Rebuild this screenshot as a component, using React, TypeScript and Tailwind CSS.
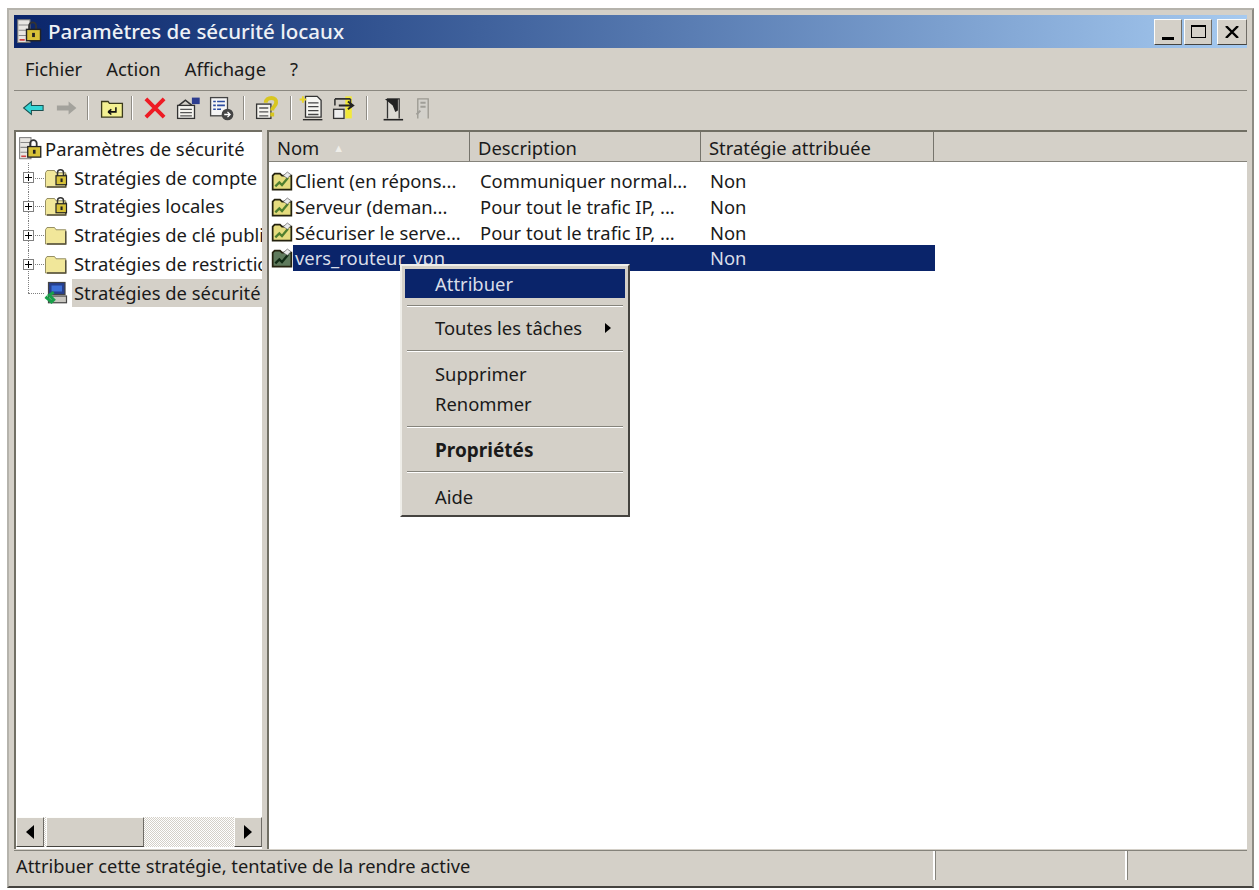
import type { ReactNode } from 'react';

const SHIELD = 'border border-t-[#fdfdfb] border-l-[#fdfdfb] border-r-[#6f6c66] border-b-[#45433f]';

function ServerLockIcon({ size = 28 }: { size?: number }) {
  return (
    <svg width={size} height={size} viewBox="0 0 16 16" className="shrink-0">
      <rect x="1" y="1" width="7" height="13" fill="#e8e6e2" stroke="#777" strokeWidth="0.6" />
      <path d="M1.5 4h6M1.5 7h6M1.5 10h6" stroke="#888" strokeWidth="0.7" />
      <path d="M2 12.5h3" stroke="#d04040" strokeWidth="1" />
      <path d="M7.5 7V4.5a2 2 0 0 1 4 0V7" fill="none" stroke="#333" strokeWidth="1.1" />
      <rect x="6" y="6.5" width="8" height="6.5" fill="#d8c238" stroke="#222" strokeWidth="0.8" />
      <rect x="9.2" y="8.5" width="1.6" height="2.4" fill="#222" />
    </svg>
  );
}

function FolderIcon({ lock }: { lock?: boolean }) {
  return (
    <svg width="24" height="24" viewBox="0 0 16 16" className="shrink-0">
      <path d="M1 4.5 2 3h5l1 1.5h6.5V14H1z" fill="#f1e79a" stroke="#8b8458" strokeWidth="0.6" />
      <path d="M14.5 5.5V14H2" fill="none" stroke="#55503a" strokeWidth="1" />
      {lock && (
        <g>
          <path d="M9 7V4.5a2 2 0 0 1 4 0V7" fill="none" stroke="#333" strokeWidth="1" />
          <rect x="8" y="6.5" width="7" height="6" fill="#d8c238" stroke="#222" strokeWidth="0.8" />
          <rect x="11" y="8.3" width="1.4" height="2.4" fill="#222" />
        </g>
      )}
    </svg>
  );
}

function PolicyComputerIcon() {
  return (
    <svg width="24" height="24" viewBox="0 0 16 16" className="shrink-0">
      <rect x="3" y="1" width="11" height="8" fill="#26408f" stroke="#444" strokeWidth="0.8" />
      <rect x="5" y="3" width="7" height="4" fill="#3c6fd8" />
      <rect x="3" y="10" width="12" height="4.5" fill="#c9c7c1" stroke="#444" strokeWidth="0.8" />
      <path d="M1 10.5 5 14l1.5-1.5L3.5 9.5l3-2" fill="none" stroke="#18a04a" strokeWidth="2" />
    </svg>
  );
}

function PolicyIcon({ selected }: { selected?: boolean }) {
  return (
    <svg width="22" height="20" viewBox="0 0 16 15" className="shrink-0">
      <path d="M1 3.5 2.500 2h4L8 3.500h7V14H1z" fill={selected ? '#5f7a5c' : '#e5dc7e'} stroke="#24220f" strokeWidth="1.3" />
      <path d="M3 11.5 6 8.500l2 2 4.500-5.500" fill="none" stroke={selected ? '#0f2a14' : '#4f7f2f'} strokeWidth="1.7" />
      <path d="M9 3.500 12 .8l2.800 2L12 5.500z" fill="#ececec" stroke="#555" strokeWidth="0.5" />
    </svg>
  );
}

function ToolIcon({ children }: { children: ReactNode }) {
  return (
    <svg width="26" height="26" viewBox="0 0 20 20" className="shrink-0">
      {children}
    </svg>
  );
}

function Divider() {
  return <div className="w-[2px] h-[24px] mx-[6px] border-l border-l-[#8f8c85] border-r border-r-white" />;
}

function Toolbar() {
  return (
    <div className="flex items-center h-[35px] pl-[7px] border-t border-t-[#8b8880]">
      <ToolIcon>
        <path d="M2 10 8 5v3h9v4H8v3z" fill="#33d6d6" stroke="#1a5050" strokeWidth="0.8" />
      </ToolIcon>
      <div className="w-[6px]" />
      <ToolIcon>
        <path d="M18 10l-6-5v3H3v4h9v3z" fill="#a3a29c" />
      </ToolIcon>
      <div className="w-[2px]" />
      <Divider />
      <div className="w-[4px]" />
      <ToolIcon>
        <path d="M2 5h5l1 1.5h10V17H2z" fill="#f3f092" stroke="#3a3a1c" strokeWidth="1" />
        <path d="M7 13h6V9.500M7 13l2.500-2M7 13l2.500 2" fill="none" stroke="#111" strokeWidth="1.2" />
      </ToolIcon>
      <Divider />
      <div className="w-[3px]" />
      <ToolIcon>
        <path d="M3 3l14 14M17 3 3 17" stroke="#ee1b24" strokeWidth="3" />
      </ToolIcon>
      <div className="w-[7px]" />
      <ToolIcon>
        <rect x="2" y="8" width="13" height="10" fill="#f4f3ee" stroke="#333" strokeWidth="1" />
        <path d="M4 11h9M4 13.5h9M4 16h9" stroke="#555" strokeWidth="1" />
        <path d="M3 8l5-4 5 4" fill="none" stroke="#333" strokeWidth="1.2" />
        <rect x="13" y="2" width="6" height="5" fill="#2d3d8f" />
      </ToolIcon>
      <div className="w-[7px]" />
      <ToolIcon>
        <rect x="2" y="2" width="13" height="14" fill="#f5f5f5" stroke="#444" strokeWidth="1" />
        <path d="M4 5h2M7 5h6M4 8h2M7 8h6M4 11h2M7 11h3" stroke="#2d4da0" strokeWidth="1.2" />
        <circle cx="15" cy="15" r="4.5" fill="#444" />
        <path d="M12.5 15h4M15 13l2 2-2 2" fill="none" stroke="#fff" strokeWidth="1" />
      </ToolIcon>
      <div className="w-[3px]" />
      <Divider />
      <div className="w-[3px]" />
      <ToolIcon>
        <rect x="2" y="7" width="11" height="11" fill="#f4f3ee" stroke="#333" strokeWidth="1" />
        <path d="M4 10h7M4 13h7M4 16h7" stroke="#555" strokeWidth="1" />
        <path d="M9 6c0-5 9-5 8 0 0 3-3 2.5-3 6" fill="none" stroke="#d8c620" strokeWidth="3" />
        <rect x="12.5" y="13.5" width="3" height="3" fill="#d8c620" />
      </ToolIcon>
      <div className="w-[4px]" />
      <Divider />
      <div className="w-[1px]" />
      <ToolIcon>
        <path d="M5 1h9l3 3v13H5z" fill="#f6f6f2" stroke="#333" strokeWidth="1" />
        <path d="M7 6h8M7 9h8M7 12h8M7 15h8" stroke="#444" strokeWidth="1" />
        <path d="M3 1v5M0.5 3.5h5" stroke="#e8d52a" strokeWidth="1.5" />
        <path d="M3 19h15" stroke="#222" strokeWidth="1" />
      </ToolIcon>
      <div className="w-[6px]" />
      <ToolIcon>
        <rect x="11" y="1" width="5" height="17" fill="#f2e93a" />
        <path d="M3 3h12M3 3v5M15 3v5" fill="none" stroke="#333" strokeWidth="1.2" />
        <rect x="2" y="11" width="8" height="7" fill="#eee" stroke="#333" strokeWidth="1" />
        <path d="M6 8h10M13 5l4 3-4 3" fill="none" stroke="#222" strokeWidth="1.5" />
      </ToolIcon>
      <div className="w-[3px]" />
      <Divider />
      <div className="w-[7px]" />
      <ToolIcon>
        <path d="M5 18V3h9v15" fill="#dcdad4" stroke="#333" strokeWidth="1" />
        <path d="M3 3l6 5 2 5 2-1V3" fill="#222" />
        <path d="M2 19h15" stroke="#222" strokeWidth="1.2" />
      </ToolIcon>
      <div className="w-[3px]" />
      <ToolIcon>
        <path d="M6 18V3h8v15" fill="#d3d1cb" stroke="#9a9890" strokeWidth="1" />
        <path d="M8 6h4M8 9h4M5 15l3-3" stroke="#a09e98" strokeWidth="1.5" />
      </ToolIcon>
    </div>
  );
}

function TreeRow({ icon, label, selected, last }: { icon: ReactNode; label: string; selected?: boolean; last?: boolean }) {
  return (
    <div className="flex items-center h-[28.8px]">
      <div className="relative w-[28px] shrink-0 h-full">
        <div className={`absolute left-[12px] top-0 w-0 border-l border-dotted border-l-[#808080] ${last ? 'h-1/2' : 'h-full'}`} />
        <div className="absolute left-[12px] top-1/2 w-[16px] h-0 border-t border-dotted border-t-[#808080]" />
        {!last && (
          <div className="absolute left-[7px] top-[9px] w-[11px] h-[11px] bg-white border border-[#808080] flex items-center justify-center">
            <div className="relative w-[7px] h-[7px]">
              <div className="absolute left-0 top-[3px] w-[7px] h-px bg-black" />
              <div className="absolute left-[3px] top-0 w-px h-[7px] bg-black" />
            </div>
          </div>
        )}
      </div>
      {icon}
      <span className={`ml-[4px] pl-[2px] h-[28px] leading-[28px] flex-1 whitespace-nowrap overflow-hidden ${selected ? 'bg-[#d4d0c8]' : ''}`}>{label}</span>
    </div>
  );
}

function TreePane() {
  return (
    <div className="flex flex-col w-[248px] h-[719px] shrink-0 bg-white border-t-2 border-l-2 border-t-[#716f64] border-l-[#716f64] overflow-hidden">
      <div className="flex-1 pt-[2px] text-[18.4px] text-[#1a1a1a]">
        <div className="flex items-center h-[29.3px] pl-[2px]">
          <ServerLockIcon size={26} />
          <span className="ml-[1px] whitespace-nowrap">Paramètres de sécurité</span>
        </div>
        <TreeRow icon={<FolderIcon lock />} label="Stratégies de compte" />
        <TreeRow icon={<FolderIcon lock />} label="Stratégies locales" />
        <TreeRow icon={<FolderIcon />} label="Stratégies de clé publiques" />
        <TreeRow icon={<FolderIcon />} label="Stratégies de restriction" />
        <TreeRow icon={<PolicyComputerIcon />} label="Stratégies de sécurité" selected last />
      </div>
      <div className="flex h-[30px] mb-[2px] bg-[repeating-conic-gradient(#d4d0c8_0_25%,#ffffff_0_50%)] bg-[length:2px_2px]">
        <ScrollButton dir="left" />
        <div className={`w-[98px] ml-[2px] bg-[#d4d0c8] ${SHIELD}`} />
        <div className="flex-1" />
        <ScrollButton dir="right" />
      </div>
    </div>
  );
}

function ScrollButton({ dir }: { dir: 'left' | 'right' }) {
  return (
    <div className={`w-[28px] h-full bg-[#d4d0c8] flex items-center justify-center ${SHIELD}`}>
      <svg width="10" height="14" viewBox="0 0 10 14">
        <path d={dir === 'left' ? 'M9 0v14L1 7z' : 'M1 0v14l8-7z'} fill="#000" />
      </svg>
    </div>
  );
}

function ListRow({ name, desc, value, selected }: { name: string; desc: string; value: string; selected?: boolean }) {
  return (
    <div className="flex items-center h-[25.8px]">
      <div className="flex items-center w-[202px] h-full pl-[2px]">
        <PolicyIcon selected={selected} />
        <span className={`whitespace-nowrap h-full flex items-center pl-[2px] ${selected ? 'bg-[#0a246a] text-[#d9dde8] flex-1' : ''}`}>{name}</span>
      </div>
      <div className={`w-[230px] h-full flex items-center ${selected ? 'bg-[#0a246a]' : ''}`}>
        <span className="pl-[9px] whitespace-nowrap">{desc}</span>
      </div>
      <div className={`w-[234px] h-full flex items-center ${selected ? 'bg-[#0a246a] text-[#d9dde8]' : ''}`}>
        <span className="pl-[9px]">{value}</span>
      </div>
    </div>
  );
}

function ColumnHeader({ label, width, arrow }: { label: string; width: string; arrow?: boolean }) {
  return (
    <div className={`${width} h-full flex items-center pl-[8px] pt-[3px] shrink-0 border-r border-r-[#76746c]`}>
      <span>{label}</span>
      {arrow && <span className="ml-[14px] text-[11px] text-[#efeee9]">▲</span>}
    </div>
  );
}

function ListPane() {
  return (
    <div className="flex-1 h-[719px] bg-white border-t-2 border-l-2 border-t-[#716f64] border-l-[#716f64] text-[18.4px] text-[#1a1a1a]">
      <div className="flex h-[30px] bg-[#d4d0c8] border-b border-b-[#85837b]">
        <ColumnHeader label="Nom" width="w-[201px]" arrow />
        <ColumnHeader label="Description" width="w-[231px]" />
        <ColumnHeader label="Stratégie attribuée" width="w-[233px]" />
        <div className="flex-1" />
      </div>
      <div className="pt-[6px]">
        <ListRow name="Client (en répons..." desc="Communiquer normal..." value="Non" />
        <ListRow name="Serveur (deman..." desc="Pour tout le trafic IP, ..." value="Non" />
        <ListRow name="Sécuriser le serve..." desc="Pour tout le trafic IP, ..." value="Non" />
        <ListRow name="vers_routeur_vpn" desc="" value="Non" selected />
      </div>
    </div>
  );
}

function MenuItem({ label, hot, bold, arrow, h }: { label: string; hot?: boolean; bold?: boolean; arrow?: boolean; h: string }) {
  return (
    <div className={`flex items-center justify-between pl-[30px] pr-[14px] ${h} ${hot ? 'bg-[#0a246a] text-[#d9dde8]' : ''} ${bold ? 'font-bold text-[19px]' : ''}`}>
      <span>{label}</span>
      {arrow && (
        <svg width="6" height="10" viewBox="0 0 6 10">
          <path d="M0 0v10l6-5z" fill="#000" />
        </svg>
      )}
    </div>
  );
}

function MenuSeparator({ my }: { my: string }) {
  return <div className={`${my} mx-[2px] h-[2px] border-t border-t-[#85837b] border-b border-b-white`} />;
}

function ContextMenu() {
  return (
    <div className="absolute left-[391px] top-[254px] w-[230px] h-[253px] p-[3px] bg-[#d4d0c8] border-2 border-t-[#efeee9] border-l-[#efeee9] border-r-[#45433f] border-b-[#45433f] text-[18.4px] text-[#1a1a1a]">
      <MenuItem label="Attribuer" hot h="h-[29px]" />
      <MenuSeparator my="mt-[7px] mb-[6px]" />
      <MenuItem label="Toutes les tâches" arrow h="h-[30px]" />
      <MenuSeparator my="mt-[7px] mb-[7px]" />
      <MenuItem label="Supprimer" h="h-[30px]" />
      <MenuItem label="Renommer" h="h-[30px]" />
      <MenuSeparator my="mt-[7px] mb-[7px]" />
      <MenuItem label="Propriétés" bold h="h-[30px]" />
      <MenuSeparator my="mt-[6px] mb-[9px]" />
      <MenuItem label="Aide" h="h-[30px]" />
    </div>
  );
}

function WindowButton({ children, className }: { children: ReactNode; className?: string }) {
  return (
    <div className={`h-[26px] bg-[#d4d0c8] flex items-center justify-center ${SHIELD} ${className ?? ''}`}>
      {children}
    </div>
  );
}

export default function App() {
  return (
    <div className="w-[1259px] h-[890px] bg-white pt-[8px] pl-[7px] font-['Noto_Sans','Liberation_Sans',sans-serif] overflow-hidden">
      <div className="relative w-[1247px] h-[880px] flex flex-col bg-[#d4d0c8] border-t-2 border-t-[#b5b3ac] border-l-2 border-l-[#b5b3ac] border-r-2 border-r-[#8d8b84] border-b-2 border-b-[#45433f] pt-[5px] px-[5px]">
        <div className="flex items-center h-[33px] shrink-0 pl-[2px] bg-gradient-to-r from-[#0a246a] to-[#a6caf0]">
          <ServerLockIcon />
          <span className="ml-[4px] text-[20.5px] font-medium text-[#eef1f6] whitespace-nowrap">Paramètres de sécurité locaux</span>
          <div className="flex-1" />
          <WindowButton className="w-[28px]">
            <div className="w-[12px] h-[3px] bg-black mt-[13px]" />
          </WindowButton>
          <WindowButton className="w-[28px] ml-[2px]">
            <div className="w-[15px] h-[13px] border border-black border-t-2" />
          </WindowButton>
          <WindowButton className="w-[30px] ml-[5px]">
            <svg width="14" height="12" viewBox="0 0 14 12">
              <path d="M1 0l12 12M13 0 1 12" stroke="#000" strokeWidth="2.4" />
            </svg>
          </WindowButton>
        </div>
        <div className="flex items-center h-[42px] shrink-0 pl-[11px] gap-[24px] text-[18.4px] text-[#1a1a1a]">
          <span>Fichier</span>
          <span>Action</span>
          <span>Affichage</span>
          <span>?</span>
        </div>
        <Toolbar />
        <div className="flex gap-[5px] mt-[5px] shrink-0">
          <TreePane />
          <ListPane />
        </div>
        <div className="flex h-[30px] mt-[1px] shrink-0 text-[18.3px] text-[#1a1a1a] border-t border-t-[#85837b]">
          <div className="w-[921px] flex items-center pl-[2px] whitespace-nowrap border-r-2 border-r-white">
            Attribuer cette stratégie, tentative de la rendre active
          </div>
          <div className="w-[192px] border-l border-l-[#85837b] border-r-2 border-r-white" />
          <div className="flex-1 border-l border-l-[#85837b]" />
        </div>
        <ContextMenu />
      </div>
    </div>
  );
}
